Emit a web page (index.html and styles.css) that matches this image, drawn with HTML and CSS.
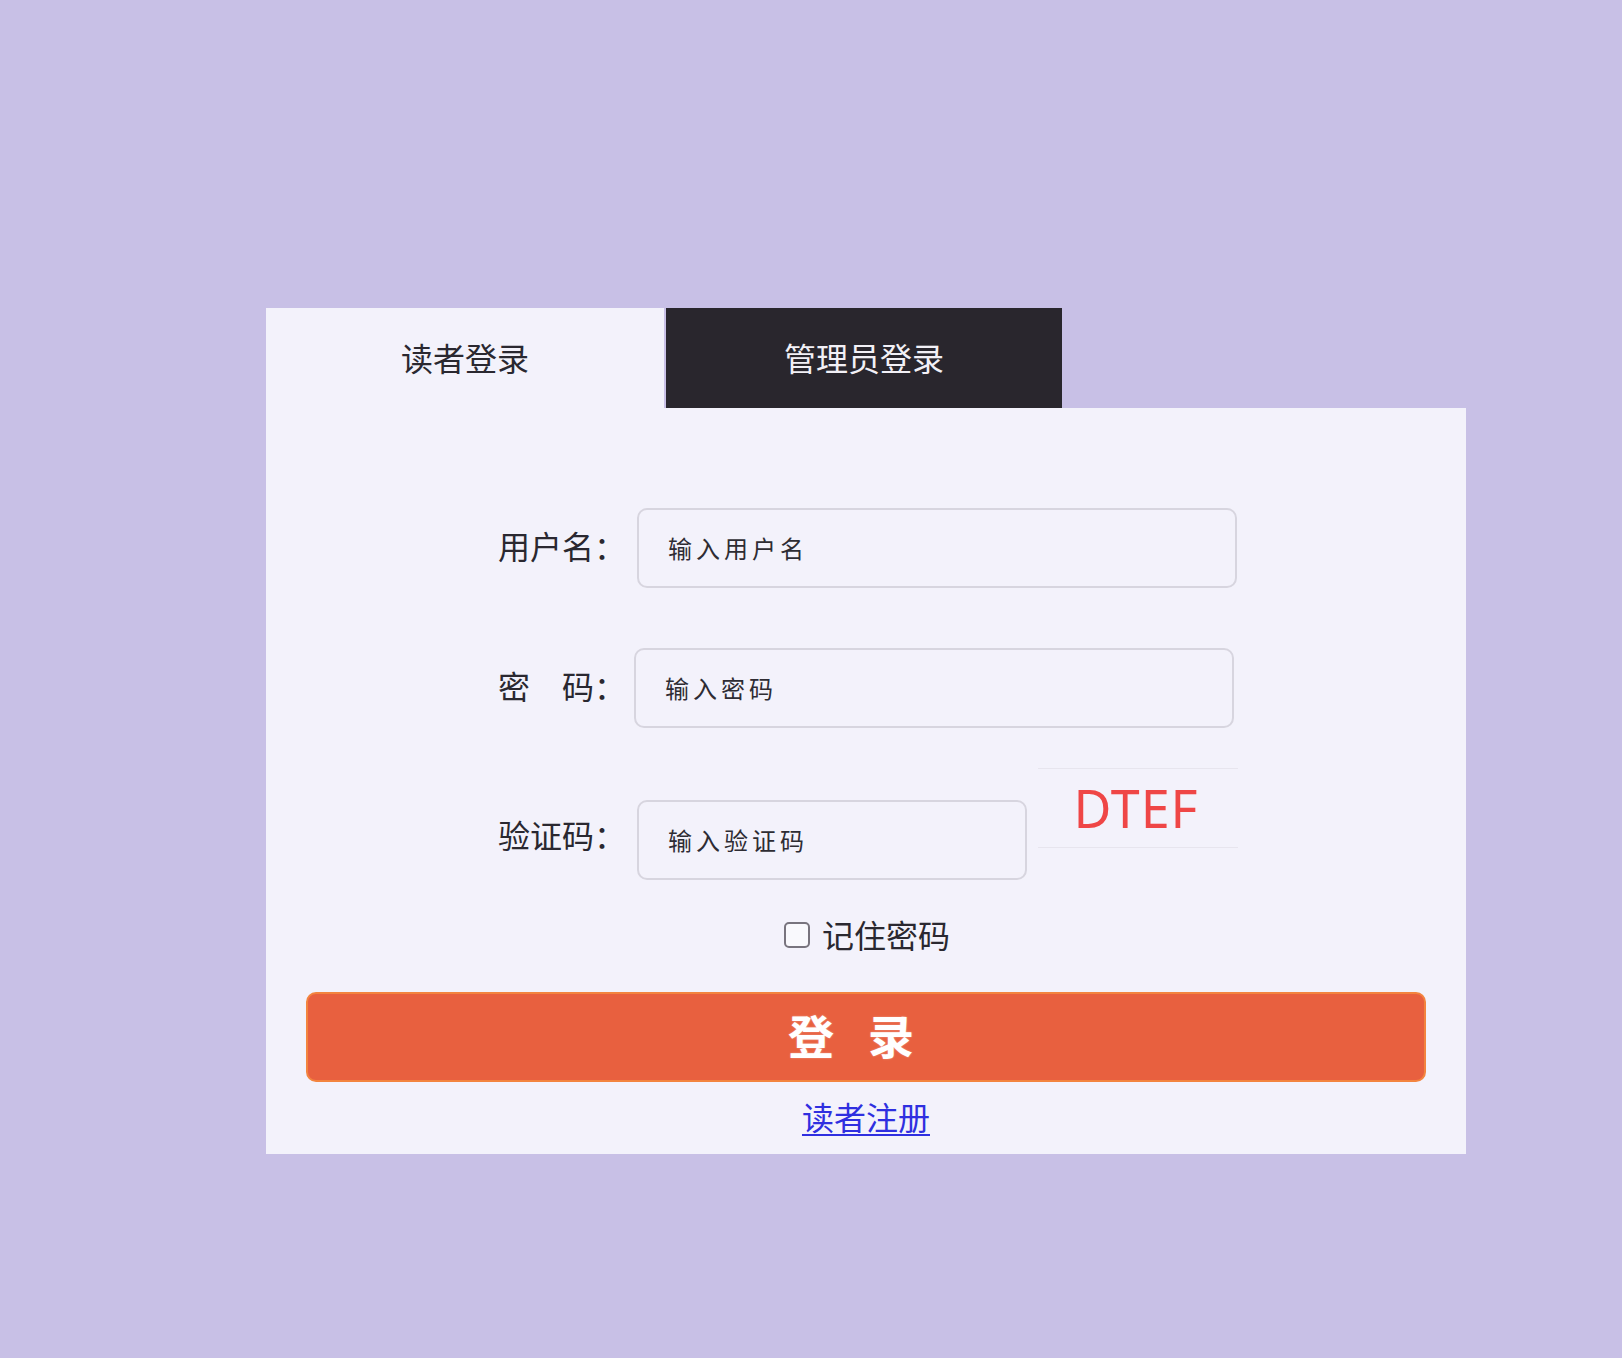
FILE: index.html
```html
<!DOCTYPE html>
<html lang="zh-CN">
<head>
<meta charset="utf-8">
<title>登录</title>
<link rel="stylesheet" href="styles.css">
</head>
<body>
<div class="card">
  <div class="tabs">
    <div class="tab tab-active">读者登录</div>
    <div class="tab tab-dark">管理员登录</div>
  </div>
  <div class="panel">
    <div class="row">
      <label class="label">用户名：</label>
      <input class="input" type="text" placeholder="输入用户名">
    </div>
    <div class="row row-pwd">
      <label class="label">密　码：</label>
      <input class="input" type="password" placeholder="输入密码">
    </div>
    <div class="row row-code">
      <label class="label">验证码：</label>
      <input class="input input-code" type="text" placeholder="输入验证码">
      <div class="captcha">DTEF</div>
    </div>
    <div class="remember">
      <input class="check" type="checkbox" id="rem">
      <label for="rem" class="remember-text">记住密码</label>
    </div>
    <button class="btn" type="button"><span class="btn-text">登录</span></button>
    <div class="reg"><a href="#" class="reg-link">读者注册</a></div>
  </div>
</div>
</body>
</html>
```
FILE: styles.css
```css
* { box-sizing: border-box; }
html, body { margin: 0; padding: 0; }
body {
  background: #c8c0e6;
  font-family: "Noto Sans CJK SC", "Noto Sans", sans-serif;
  color: #2a2830;
  min-height: 1358px;
}
.card {
  width: 1200px;
  margin-left: 266px;
  padding-top: 308px;
}
.tabs {
  display: flex;
  height: 100px;
}
.tab {
  width: 398px;
  height: 100px;
  display: flex;
  align-items: center;
  justify-content: center;
  font-size: 32px;
  padding-bottom: 3px;
}
.tab-active {
  background: #f3f2fb;
  color: #2a2830;
}
.tab-dark {
  background: #29262d;
  color: #f2f0f6;
  border-left: 2px solid #c8c0e6;
}
.panel {
  background: #f3f2fb;
  height: 746px;
  padding: 100px 40px 0 40px;
}
.row {
  display: flex;
  align-items: center;
  padding-left: 192px;
  height: 80px;
  margin-bottom: 60px;
}
.row-pwd { margin-bottom: 40px; }
.label {
  width: 128px;
  font-size: 32px;
  line-height: 40px;
  margin-right: 11px;
  padding-bottom: 6px;
  white-space: nowrap;
  color: #2a2830;
}
.input {
  width: 600px;
  height: 80px;
  border: 2px solid #d7d5df;
  border-radius: 10px;
  background: transparent;
  padding: 0 0 2px 29px;
  font-family: "Noto Sans CJK SC", "Noto Sans", sans-serif;
  font-size: 24px;
  letter-spacing: 4px;
  color: #2a2830;
  outline: none;
}
.input::placeholder { color: #2e2c33; opacity: 1; }
.row-pwd .input { margin-left: -3px; }
.row-code {
  align-items: flex-start;
  height: 113px;
  margin-bottom: 34px;
}
.row-code .label { margin-top: 46px; padding-bottom: 0; }
.input-code {
  width: 390px;
  margin-top: 32px;
}
.captcha {
  width: 200px;
  height: 80px;
  margin-left: 11px;
  border-top: 1px solid #e7e5ee;
  border-bottom: 1px solid #e7e5ee;
  display: flex;
  align-items: center;
  justify-content: center;
  font-family: "Noto Sans", sans-serif;
  font-size: 52px;
  letter-spacing: 1px;
  color: #ef4646;
  line-height: 1;
  padding-right: 4px;
}
.remember {
  display: flex;
  align-items: center;
  justify-content: center;
  height: 40px;
  padding-left: 2px;
}
.check {
  appearance: none;
  -webkit-appearance: none;
  width: 26px;
  height: 26px;
  margin: 0 12px 0 0;
  border: 2px solid #78747e;
  border-radius: 5px;
  background: #f9f9fd;
}
.remember-text {
  font-size: 32px;
  line-height: 40px;
  padding-bottom: 2px;
  color: #2a2830;
}
.btn {
  display: flex;
  align-items: center;
  justify-content: center;
  width: 1120px;
  height: 90px;
  margin-top: 37px;
  background: #e8603f;
  border: 2px solid #f3843f;
  border-radius: 10px;
  color: #ffffff;
  font-family: "Noto Sans CJK SC", "Noto Sans", sans-serif;
  font-size: 46px;
  font-weight: 700;
  padding: 0 0 6px 4px;
}
.btn-text {
  letter-spacing: 34px;
  line-height: 1;
  text-shadow: 0 0 2px rgba(255,255,255,0.4);
}
.reg {
  text-align: center;
  margin-top: 14px;
  font-size: 32px;
  line-height: 40px;
}
.reg-link {
  color: #2f2fe0;
  text-decoration: underline;
  text-underline-offset: 4px;
  text-decoration-thickness: 2px;
}
```
